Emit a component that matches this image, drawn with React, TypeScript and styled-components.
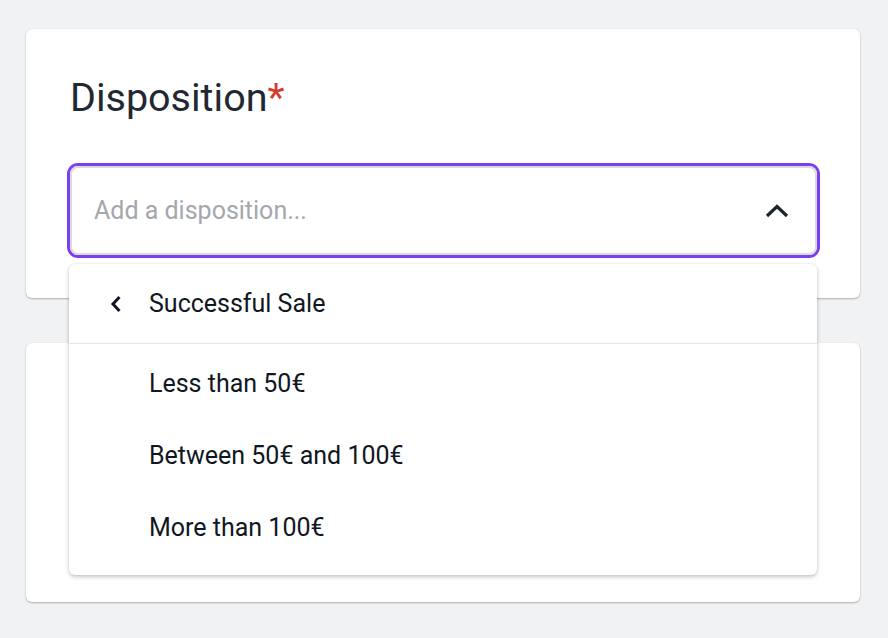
import React from "react";
import styled, { createGlobalStyle } from "styled-components";

const Global = createGlobalStyle`
  html, body {
    margin: 0;
    padding: 0;
    background: #f1f2f4;
    font-family: Roboto, "Liberation Sans", sans-serif;
  }
  * { box-sizing: border-box; }
`;

const Page = styled.div`
  display: flex;
  flex-direction: column;
  gap: 45px;
  padding: 29px 28px 36px 26px;
  min-height: 638px;
`;

const Card = styled.section<{ $h?: number }>`
  background: #ffffff;
  border-radius: 6px;
  box-shadow: 0 1px 2px rgba(0, 0, 0, 0.28), 0 0 1px rgba(0, 0, 0, 0.12);
  padding: 46px 43px 43px 44px;
  ${(p) => (p.$h ? `height: ${p.$h}px;` : "")}
`;

const Title = styled.h2`
  margin: 0;
  font-size: 39.5px;
  line-height: 46px;
  font-weight: 400;
  color: #212832;
`;

const Required = styled.span`
  color: #d23c2c;
`;

const SelectWrap = styled.div`
  position: relative;
  margin-top: 45px;
`;

const SelectBox = styled.div`
  height: 89px;
  border: 2px solid #d8dadd;
  border-radius: 8px;
  box-shadow: 0 0 0 3px #7c3ff0;
  display: flex;
  align-items: center;
  justify-content: space-between;
  padding: 0 26px 0 22px;
`;

const Placeholder = styled.span`
  font-size: 25px;
  line-height: 30px;
  color: #a4a7ac;
`;

const Menu = styled.div`
  position: absolute;
  top: calc(100% + 9px);
  left: -1px;
  right: 0;
  background: #ffffff;
  border-radius: 6px;
  box-shadow: 0 2px 4px rgba(0, 0, 0, 0.22), 0 0 2px rgba(0, 0, 0, 0.1);
  z-index: 2;
`;

const MenuHeader = styled.div`
  height: 80px;
  border-bottom: 1px solid #e6e7e9;
  display: flex;
  align-items: center;
  gap: 27px;
  padding-left: 41px;
`;

const List = styled.ul`
  list-style: none;
  margin: 0;
  padding: 4px 0 11px;
`;

const ItemText = styled.span`
  font-size: 25px;
  line-height: 30px;
  color: #111722;
`;

const Item = styled.li`
  height: 72px;
  display: flex;
  align-items: center;
  padding-left: 80px;
`;

const ChevronUp = () => (
  <svg width="24" height="14" viewBox="0 0 24 14" fill="none">
    <polyline
      points="2,12 12,2.5 22,12"
      stroke="#1f252d"
      strokeWidth="3.2"
      strokeLinejoin="miter"
    />
  </svg>
);

const ChevronLeft = () => (
  <svg width="12" height="18" viewBox="0 0 12 18" fill="none">
    <polyline
      points="9.5,2 3,9 9.5,16"
      stroke="#111722"
      strokeWidth="3"
      strokeLinejoin="miter"
    />
  </svg>
);

const items = ["Less than 50€", "Between 50€ and 100€", "More than 100€"];

export default function App() {
  return (
    <>
      <Global />
      <Page>
        <Card>
          <Title>
            Disposition<Required>*</Required>
          </Title>
          <SelectWrap>
            <SelectBox>
              <Placeholder>Add a disposition...</Placeholder>
              <ChevronUp />
            </SelectBox>
            <Menu>
              <MenuHeader>
                <ChevronLeft />
                <ItemText>Successful Sale</ItemText>
              </MenuHeader>
              <List>
                {items.map((t) => (
                  <Item key={t}>
                    <ItemText>{t}</ItemText>
                  </Item>
                ))}
              </List>
            </Menu>
          </SelectWrap>
        </Card>
        <Card $h={259} />
      </Page>
    </>
  );
}
